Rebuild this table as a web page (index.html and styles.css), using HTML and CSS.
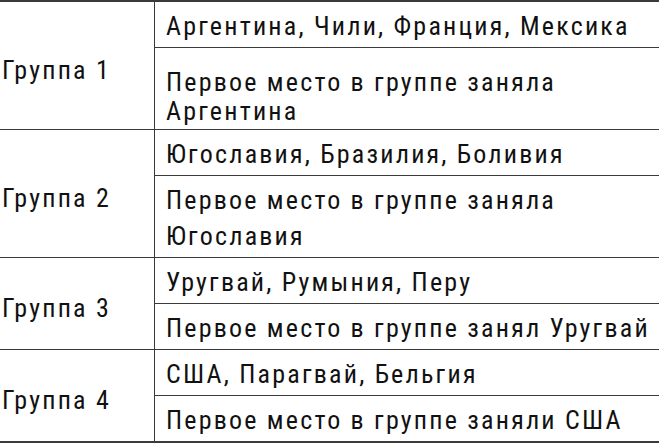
FILE: index.html
```html
<!DOCTYPE html>
<html lang="ru">
<head>
<meta charset="utf-8">
<link rel="stylesheet" href="styles.css">
</head>
<body>
<table class="groups">
  <tbody>
    <tr class="group-start">
      <td class="group" rowspan="2">Группа 1</td>
      <td class="info">Аргентина, Чили, Франция, Мексика</td>
    </tr>
    <tr>
      <td class="info tight">Первое место в группе заняла<br>Аргентина</td>
    </tr>
    <tr class="group-start">
      <td class="group" rowspan="2">Группа 2</td>
      <td class="info">Югославия, Бразилия, Боливия</td>
    </tr>
    <tr>
      <td class="info">Первое место в группе заняла<br>Югославия</td>
    </tr>
    <tr class="group-start">
      <td class="group" rowspan="2">Группа 3</td>
      <td class="info">Уругвай, Румыния, Перу</td>
    </tr>
    <tr>
      <td class="info">Первое место в группе занял Уругвай</td>
    </tr>
    <tr class="group-start">
      <td class="group" rowspan="2">Группа 4</td>
      <td class="info">США, Парагвай, Бельгия</td>
    </tr>
    <tr>
      <td class="info">Первое место в группе заняли США</td>
    </tr>
  </tbody>
</table>
</body>
</html>
```
FILE: styles.css
```css
html, body {
  margin: 0;
  padding: 0;
  background: #fff;
}

.groups {
  width: 659px;
  border-collapse: collapse;
  border-top: 2px solid #3a3a3a;
  border-bottom: 2px solid #3a3a3a;
  font-family: "Roboto", "Liberation Sans", sans-serif;
  font-stretch: 75%;
  font-size: 26px;
  letter-spacing: 2.2px;
  color: #111;
}

.groups td {
  padding: 6px 0 3px;
  line-height: 36px;
  border-top: 1px solid #3a3a3a;
  vertical-align: middle;
  text-align: left;
  white-space: nowrap;
}

.groups .group {
  width: 152px;
  padding: 9px 0 0 2px;
  border-right: 1px solid #3a3a3a;
}

.groups .info {
  padding-left: 11px;
}

.groups .tight {
  line-height: 29px;
  padding-top: 20px;
  padding-bottom: 3px;
}
```
